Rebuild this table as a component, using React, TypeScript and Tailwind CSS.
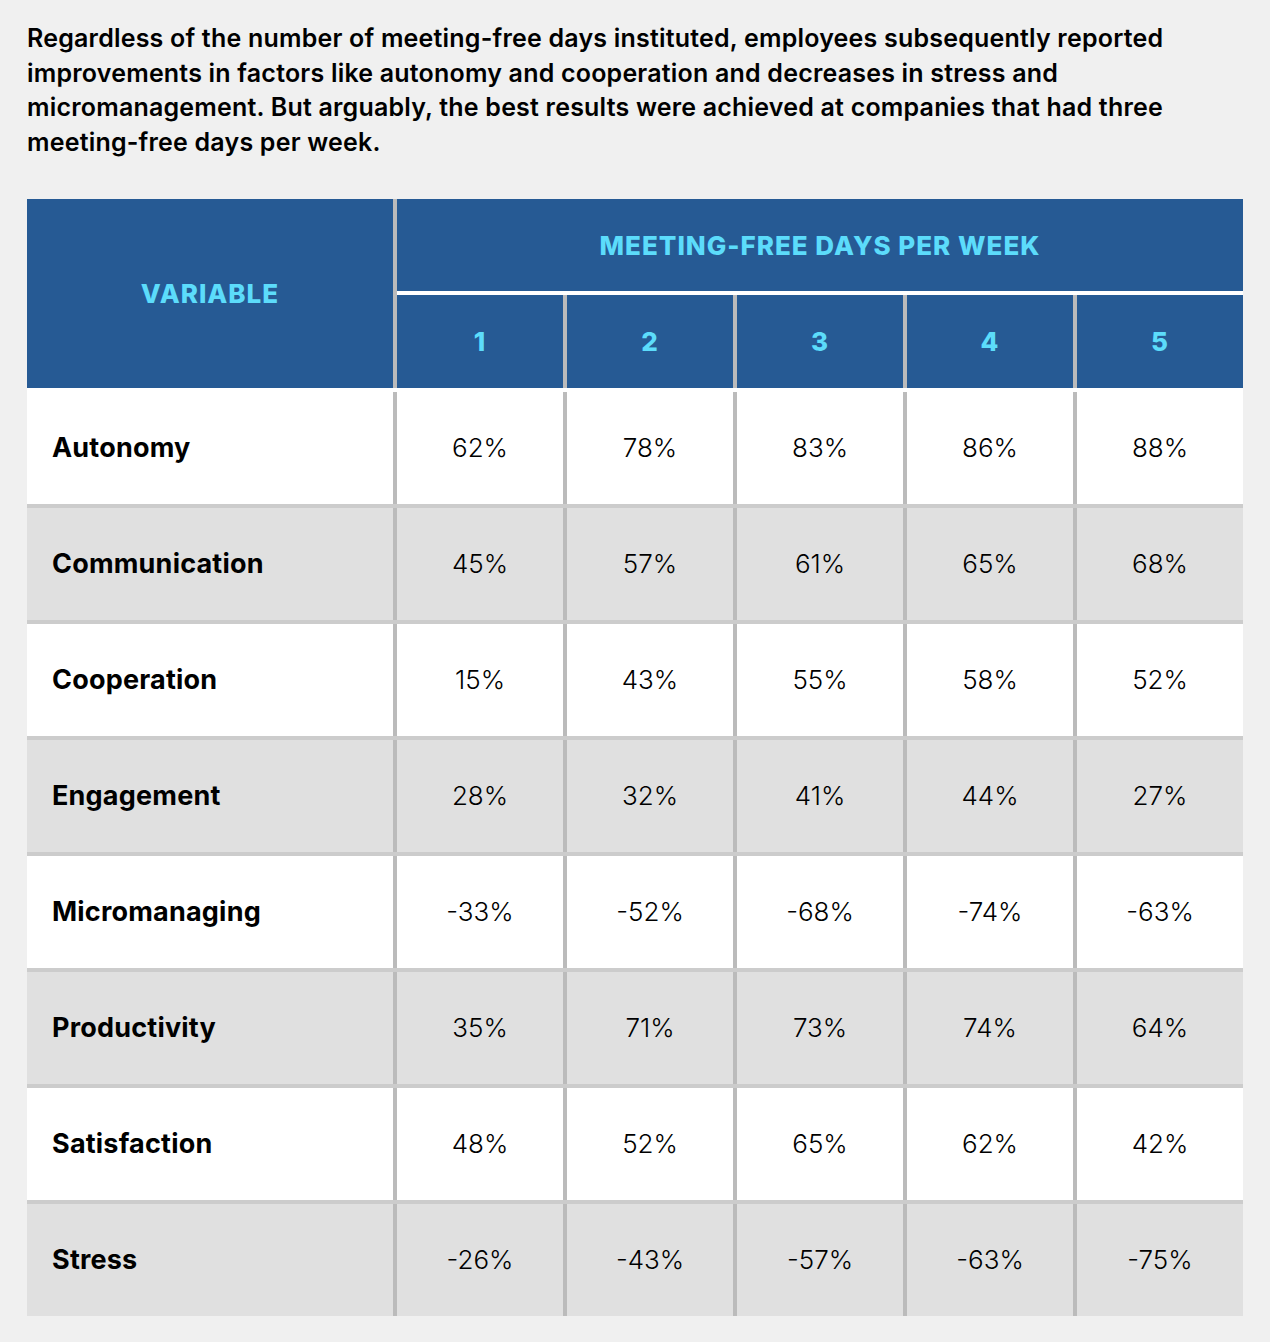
const columns = ["1", "2", "3", "4", "5"];

const rows: { name: string; values: string[] }[] = [
  { name: "Autonomy", values: ["62%", "78%", "83%", "86%", "88%"] },
  { name: "Communication", values: ["45%", "57%", "61%", "65%", "68%"] },
  { name: "Cooperation", values: ["15%", "43%", "55%", "58%", "52%"] },
  { name: "Engagement", values: ["28%", "32%", "41%", "44%", "27%"] },
  { name: "Micromanaging", values: ["-33%", "-52%", "-68%", "-74%", "-63%"] },
  { name: "Productivity", values: ["35%", "71%", "73%", "74%", "64%"] },
  { name: "Satisfaction", values: ["48%", "52%", "65%", "62%", "42%"] },
  { name: "Stress", values: ["-26%", "-43%", "-57%", "-63%", "-75%"] },
];

export default function App() {
  return (
    <main className="min-h-[1342px] bg-[#f0f0f0] px-[27px] pt-[21px] pb-[26px] font-['Inter','Liberation_Sans',sans-serif] text-black">
      <p className="text-[25px] font-semibold leading-[34.5px] tracking-[0.2px]">
        Regardless of the number of meeting-free days instituted, employees subsequently reported
        <br />
        improvements in factors like autonomy and cooperation and decreases in stress and
        <br />
        micromanagement. But arguably, the best results were achieved at companies that had three
        <br />
        meeting-free days per week.
      </p>

      <section className="mt-[40px] w-[1216px]">
        {/* header */}
        <div className="flex border-b-4 border-white bg-[#265a94] text-[26px] font-extrabold tracking-[1px] text-[#5cdcfb]">
          <div className="flex h-[189px] w-[370px] items-center justify-center border-r-4 border-[#bbbbbb]">
            VARIABLE
          </div>
          <div className="flex w-[846px] flex-col">
            <div className="flex h-[96px] items-center justify-center border-b-4 border-white">
              MEETING-FREE DAYS PER WEEK
            </div>
            <div className="flex h-[93px]">
              {columns.map((c, i) => (
                <div
                  key={c}
                  className={
                    i === 0
                      ? "flex w-[166px] items-center justify-center"
                      : "flex w-[170px] items-center justify-center border-l-4 border-[#bbbbbb]"
                  }
                >
                  {c}
                </div>
              ))}
            </div>
          </div>
        </div>

        {/* body */}
        {rows.map((row, r) => (
          <div
            key={row.name}
            className={
              "flex " +
              (r === 0 ? "h-[112px] " : "h-[116px] border-t-4 border-[#cccccc] ") +
              (r % 2 === 0 ? "bg-white" : "bg-[#e0e0e0]")
            }
          >
            <div className="flex w-[366px] items-center pl-[25px] text-[27px] font-bold tracking-[0.2px]">
              {row.name}
            </div>
            {row.values.map((v, i) => (
              <div
                key={i}
                className="flex w-[170px] items-center justify-center border-l-4 border-[#bbbbbb] pb-[2px] text-[26px] font-light"
              >
                {v}
              </div>
            ))}
          </div>
        ))}
      </section>
    </main>
  );
}
